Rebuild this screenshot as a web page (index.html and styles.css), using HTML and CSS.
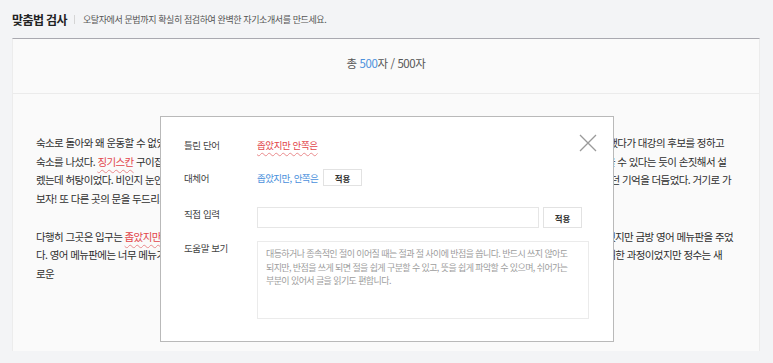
FILE: index.html
```html
<!DOCTYPE html>
<html lang="ko">
<head>
    <meta charset="UTF-8">
    <meta name="viewport" content="width=device-width, initial-scale=1.0">
    <title>맞춤법 검사</title>
    <link rel="stylesheet" href="styles.css">
</head>
<body>
    <div class="page-head">
        <h1>맞춤법 검사</h1>
        <span class="divider"></span>
        <p>오탈자에서 문법까지 확실히 점검하여 완벽한 자기소개서를 만드세요.</p>
    </div>

    <div class="checker">
        <div class="count">총 <em>500</em>자 / 500자</div>
        <div class="essay">
            <p>
                숙소로 돌아와 왜 운동할 수 없었는지 곰곰이 생각하며 한참을 쉬다가 배가 고파져서 근처에 있는 식당들을 하나씩 찬찬히 검색해 보고 한참 고민했다가 대강의 후보를 정하고<br>
                숙소를 나섰다. <span class="typo">징기스칸</span> 구이집이 제일 먼저 눈에 들어왔는데 가게 앞을 지나가니 주인아저씨가 창 너머로 우리를 반갑게 바라보며 안으로 들어올 수 있다는 듯이 손짓해서 설<br>
                렜는데 허탕이었다. 비인지 눈인지 모를 것이 내리기 시작했고 우리는 어디로 가야 할지 몰라 한동안 길 위에서 조용히 서성이다가 예전에 가 보았던 기억을 더듬었다. 거기로 가<br>
                보자! 또 다른 곳의 문을 두드리기로 했다.
            </p>
            <p>
                다행히 그곳은 입구는 <span class="typo">좁았지만 안쪽은</span> 넓었고 테이블도 여유가 있었으며 주문을 받으러 온 직원은 우리가 말을 꺼내기도 전에 영어를 잘하지 못했지만 금방 영어 메뉴판을 주었<br>
                다. 영어 메뉴판에는 너무 메뉴가 많아서 사진도 없이 글자만 빼곡하게 적혀 있어서 우리 둘이 먹을 음식을 하나 고르는 것은 정말 꽤 복잡하고 난해한 과정이었지만 정수는 새<br>
                로운
            </p>
        </div>

        <div class="fix-popup">
            <button class="close" aria-label="닫기">
                <svg width="18" height="18" viewBox="0 0 18 18"><path d="M1 1L17 17M17 1L1 17" stroke="#9a9a9a" stroke-width="1.3" fill="none"/></svg>
            </button>
            <div class="row row-wrong">
                <label>틀린 단어</label>
                <span class="wrong">좁았지만 안쪽은</span>
            </div>
            <div class="row row-suggest">
                <label>대체어</label>
                <span class="suggest">좁았지만, 안쪽은</span>
                <button class="apply">적용</button>
            </div>
            <div class="row row-input">
                <label>직접 입력</label>
                <input type="text">
                <button class="apply tall">적용</button>
            </div>
            <div class="row row-help">
                <label>도움말 보기</label>
                <div class="help">대등하거나 종속적인 절이 이어질 때는 절과 절 사이에 반점을 씁니다. 반드시 쓰지 않아도 되지만, 반점을 쓰게 되면 절을 쉽게 구분할 수 있고, 뜻을 쉽게 파악할 수 있으며, 쉬어가는 부분이 있어서 글을 읽기도 편합니다.</div>
            </div>
        </div>
    </div>
</body>
</html>
```

FILE: styles.css
```css
body, html {
    margin: 0;
    padding: 0;
    background: #f3f4f6;
    font-family: "Noto Sans CJK KR", "Noto Sans", sans-serif;
    color: #333;
}

.page-head {
    display: flex;
    align-items: center;
    height: 38px;
    padding: 0 12px;
}

.page-head h1 {
    margin: 0;
    font-size: 12px;
    font-weight: bold;
    letter-spacing: -0.6px;
    color: #222;
}

.page-head .divider {
    width: 1px;
    height: 9px;
    background: #d5d5d5;
    margin: 0 8px 0 7px;
}

.page-head p {
    margin: 0;
    font-size: 9px;
    letter-spacing: -0.4px;
    color: #555;
}

.checker {
    position: relative;
    margin: 0 13px 0 12px;
    background: #fafafa;
    border-top: 1px solid #a9a9b0;
    border-left: 1px solid #ececec;
    border-right: 1px solid #ececec;
    height: 312px;
}

.count {
    height: 54px;
    line-height: 48px;
    text-align: center;
    font-size: 11.5px;
    letter-spacing: -0.4px;
    color: #555;
    border-bottom: 1px solid #ebebeb;
}

.count em {
    font-style: normal;
    color: #4a90dc;
}

.essay {
    padding: 40px 24px 0 23px;
    font-size: 10.5px;
    line-height: 18.7px;
    letter-spacing: -0.6px;
    color: #2e2e2e;
}

.essay p {
    margin: 0 0 18.7px;
    white-space: nowrap;
}

.typo {
    color: #e2454a;
    text-decoration: underline wavy #e98a8c;
    text-decoration-thickness: 1px;
    text-underline-offset: 3px;
}

.fix-popup {
    position: absolute;
    left: 147px;
    top: 77px;
    width: 429px;
    height: 203px;
    padding: 21px 0 0 23px;
    background: #fff;
    border: 1px solid #b9b9b9;
}

.close {
    position: absolute;
    top: 17px;
    right: 16px;
    width: 18px;
    height: 18px;
    padding: 0;
    border: none;
    background: none;
    cursor: pointer;
}

.close svg {
    display: block;
}

.row {
    display: flex;
    align-items: flex-start;
    font-size: 9.5px;
    letter-spacing: -0.4px;
}

.row label {
    width: 73px;
    line-height: 14px;
    color: #444;
}

.row-wrong {
    height: 20px;
}

.row-suggest {
    align-items: center;
    margin-top: 11px;
}

.row-input {
    margin-top: 21px;
}

.row-help {
    margin-top: 13px;
}

.wrong {
    line-height: 14px;
    color: #e2454a;
    text-decoration: underline wavy #e98a8c;
    text-decoration-thickness: 1px;
    text-underline-offset: 3px;
}

.suggest {
    letter-spacing: -0.6px;
    color: #4a90dc;
}

.apply {
    margin-left: 5px;
    width: 39px;
    height: 17px;
    padding: 0;
    border: 1px solid #e2e2e2;
    background: #fff;
    font-family: inherit;
    font-size: 8.5px;
    font-weight: bold;
    color: #333;
    cursor: pointer;
}

.apply.tall {
    margin-left: 4px;
    height: 21px;
}

.row-input input {
    width: 280px;
    height: 19px;
    padding: 0;
    border: 1px solid #e6e6e6;
    outline: none;
}

.help {
    box-sizing: border-box;
    width: 332px;
    height: 78px;
    padding: 5px 16px 5px 8px;
    border: 1px solid #ebebeb;
    font-size: 9px;
    line-height: 13.5px;
    letter-spacing: -0.6px;
    color: #9d9d9d;
}
```
